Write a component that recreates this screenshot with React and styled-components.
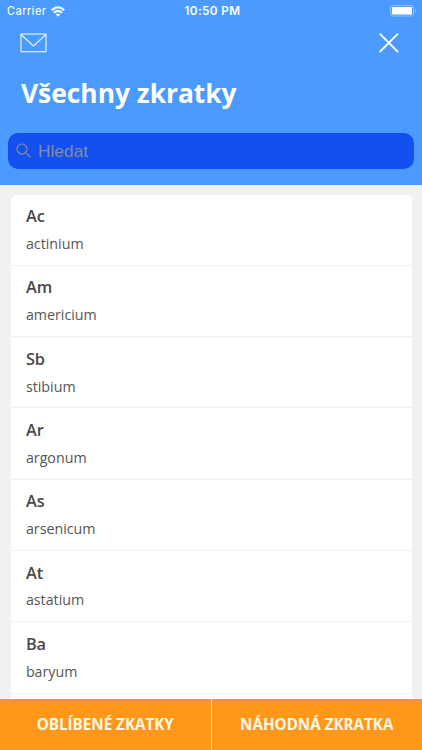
import React from 'react';
import styled, { createGlobalStyle } from 'styled-components';

const Global = createGlobalStyle`
  *{box-sizing:border-box}
  body{margin:0;background:#f1f1f1;font-family:"Open Sans",sans-serif}
`;
const Screen = styled.div`height:750px;width:422px;display:flex;flex-direction:column;overflow:hidden;background:#f1f1f1;`;
const Header = styled.header`height:184.5px;flex:none;background:#4a9aff;color:#fff;`;
const StatusBar = styled.div`height:22px;display:grid;grid-template-columns:1fr 1fr 1fr;align-items:center;padding:0 5px 0 7px;font:400 12px/22px Roboto,sans-serif;`;
const Carrier = styled.div`display:flex;align-items:center;gap:5px;letter-spacing:.5px;`;
const Clock = styled.div`text-align:center;font:600 11.7px/22px Inter,sans-serif;letter-spacing:.42px;padding-left:1px;`;
const Battery = styled.div`display:flex;justify-content:flex-end;`;
const Toolbar = styled.div`height:42px;display:flex;align-items:center;justify-content:space-between;padding:0 23px 0 20px;`;
const Title = styled.h1`margin:8px 0 0 21px;font-size:26.35px;line-height:42px;font-weight:700;`;
const Search = styled.div`margin:18.7px 8.4px 0;height:36.3px;border-radius:10px;background:#1450f0;display:flex;align-items:center;gap:7px;padding-left:7.5px;color:#858b9f;font:17.2px/36px "Liberation Sans",sans-serif;letter-spacing:.1px;`;
const List = styled.main`flex:1;min-height:0;overflow:hidden;margin:10px 10.5px 0;background:#fff;border-radius:5px 5px 0 0;`;
const Row = styled.div`height:71.3px;border-bottom:1px solid #f0f0f0;padding:9.6px 15.4px 0;color:#484848;`;
const Symbol = styled.div`font-size:16.3px;line-height:24px;font-weight:600;`;
const Name = styled.div`font-size:14.25px;line-height:20px;margin-top:5.9px;color:#555;`;
const Footer = styled.footer`height:51.4px;flex:none;display:flex;background:#ff981a;`;
const Action = styled.button`flex:1;border:0;border-left:${p => p.$divided ? '1px solid #ffe8c8' : '0'};padding:0;background:none;color:#fff8e8;font:700 15.2px "Open Sans",sans-serif;`;

const elements = [['Ac','actinium'],['Am','americium'],['Sb','stibium'],['Ar','argonum'],['As','arsenicum'],['At','astatium'],['Ba','baryum']];

export default function App() {
  return <><Global/><Screen>
    <Header>
      <StatusBar>
        <Carrier>Carrier<svg width="14" height="11" viewBox="0 0 14 11" fill="none" stroke="#fff" strokeWidth="2"><path d="M.7 4.2Q7-1.8 13.3 4.2M2.9 6.8Q7 3 11.1 6.8"/><path d="M4.7 8.5Q7 6.5 9.3 8.5L7 10.8Z" fill="#fff" stroke="none"/></svg></Carrier>
        <Clock>10:50 PM</Clock>
        <Battery><svg width="27" height="12"><rect x=".5" y=".5" width="23" height="10.5" rx="2.5" fill="none" stroke="#fff" opacity=".4"/><rect x="2" y="2" width="20" height="7.5" rx="1" fill="#fff"/><path d="M25 4q2 2 0 4z" fill="#fff" opacity=".5"/></svg></Battery>
      </StatusBar>
      <Toolbar>
        <svg width="27" height="20" fill="none" stroke="#eefaff" strokeWidth="1.1"><rect x="1" y="1" width="25" height="17.7"/><path d="M1 1.5L13.5 13L26 1.5"/></svg>
        <svg width="20" height="20" stroke="#fff" strokeWidth="1.8" strokeLinecap="round"><path d="M1.2 1.2L18.5 18.5M18.5 1.2L1.2 18.5"/></svg>
      </Toolbar>
      <Title>Všechny zkratky</Title>
      <Search><svg width="15" height="15" fill="none" stroke="#858b9f" strokeWidth="1.2" strokeLinecap="round"><circle cx="6" cy="6" r="5"/><path d="M9.6 9.6L14.2 14"/></svg>Hledat</Search>
    </Header>
    <List>{elements.map(([s,n]) => <Row key={s}><Symbol>{s}</Symbol><Name>{n}</Name></Row>)}</List>
    <Footer><Action>OBLÍBENÉ ZKATKY</Action><Action $divided>NÁHODNÁ ZKRATKA</Action></Footer>
  </Screen></>;
}
